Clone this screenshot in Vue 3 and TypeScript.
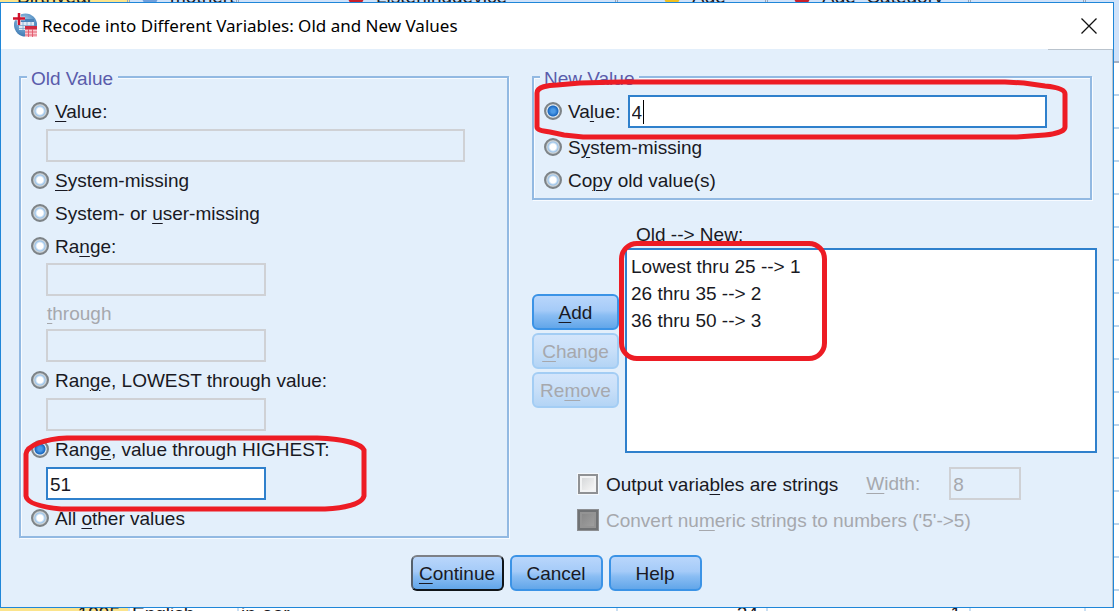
<script setup lang="ts">
import { ref } from 'vue'

interface SheetColumn {
  width: number
  name: string
  cell: string
  dot?: string
  shade?: boolean
  end?: boolean
}

const columns: SheetColumn[] = [
  { width: 130, name: 'Birthyear', cell: '1995', shade: true, end: true },
  { width: 109, name: 'mothert', cell: 'English', dot: '#6f9fdc' },
  { width: 379, name: 'Listeningdevice', cell: 'in-ear', dot: '#c8202c' },
  { width: 150, name: 'Age', cell: '24', dot: '#f0c020', end: true },
  { width: 203, name: 'Age_Category', cell: '1', dot: '#c8202c', end: true },
  { width: 115, name: '', cell: '' },
  { width: 80, name: '', cell: '' },
]
const emptyRows = 16

const oldKind = ref('highest')
const newKind = ref('value')
const highest = ref('51')
const newValue = ref('4')
const outputStrings = ref(false)
const rules = ref<string[]>(['Lowest thru 25 --> 1', '26 thru 35 --> 2', '36 thru 50 --> 3'])
</script>

<template>
  <div class="desktop">
    <div class="sheet-view" aria-hidden="true">
      <table class="sheet">
        <colgroup>
          <col v-for="(c, i) in columns" :key="i" :style="{ width: c.width + 'px' }" />
        </colgroup>
        <thead>
          <tr>
            <th v-for="(c, i) in columns" :key="i" :class="{ shade: c.shade }">
              <span class="head" :class="'head-' + i">
                <i v-if="c.dot" class="dot" :style="{ background: c.dot }"></i>{{ c.name }}
              </span>
            </th>
          </tr>
        </thead>
        <tbody>
          <tr v-for="r in emptyRows" :key="r">
            <td v-for="(c, i) in columns" :key="i" :class="{ shade: c.shade }"></td>
          </tr>
          <tr class="filled">
            <td v-for="(c, i) in columns" :key="i" :class="{ shade: c.shade, right: c.end }">{{ c.cell }}</td>
          </tr>
        </tbody>
      </table>
    </div>

    <section class="dialog" role="dialog" aria-labelledby="dialog-title">
      <header class="titlebar">
        <svg class="app-icon" viewBox="0 0 24 24" aria-hidden="true">
          <defs>
            <radialGradient id="ball" cx="0.45" cy="0.35" r="0.7">
              <stop offset="0" stop-color="#a9cbe8" />
              <stop offset="0.6" stop-color="#5f97c8" />
              <stop offset="1" stop-color="#3a74ad" />
            </radialGradient>
          </defs>
          <circle cx="12.500" cy="12" r="11.500" fill="url(#ball)" />
          <path d="M6 9h15v8H6z" fill="#dfeaf5" />
          <path d="M6 12.500h15M6 15.500h15M10 9v8M14 9v8M18 9v8" stroke="#7fa6cc" stroke-width="0.800" />
          <path d="M6 6h15v3H6z" fill="#4b82b8" />
          <path d="M12 13h12v11H12z" fill="#f9c9cf" />
          <path d="M12 13h12v3.500H12z" fill="#cf2a40" />
          <path d="M12 19h12M12 22h12M15.500 16v8M19.500 16v8" stroke="#e2566a" stroke-width="0.900" />
          <path d="M6 0v12M0 5.500h12" stroke="#fff" stroke-width="3.600" />
          <path d="M6 0v12M0 5.500h12" stroke="#d0112b" stroke-width="2.500" />
        </svg>
        <h1 id="dialog-title">Recode into Different Variables: Old and New Values</h1>
        <button class="close" type="button" aria-label="Close">
          <svg viewBox="0 0 16 16" aria-hidden="true"><path d="M0.500 0.500l15 15M15.500 0.500l-15 15" stroke="#111" stroke-width="1.300" /></svg>
        </button>
      </header>

      <form class="body" @submit.prevent>
        <div class="columns">
          <fieldset class="group old">
            <legend>Old Value</legend>
            <label class="option"><input v-model="oldKind" type="radio" name="old" value="value" /><span><u>V</u>alue:</span></label>
            <input class="field wide" type="text" disabled aria-label="Old value" />
            <label class="option"><input v-model="oldKind" type="radio" name="old" value="sysmis" /><span><u>S</u>ystem-missing</span></label>
            <label class="option"><input v-model="oldKind" type="radio" name="old" value="usermis" /><span>System- or <u>u</u>ser-missing</span></label>
            <label class="option"><input v-model="oldKind" type="radio" name="old" value="range" /><span>Ra<u>n</u>ge:</span></label>
            <input class="field tight" type="text" disabled aria-label="Range start" />
            <label class="through" for="range-end"><span><u>t</u>hrough</span></label>
            <input id="range-end" class="field range-end" type="text" disabled />
            <label class="option"><input v-model="oldKind" type="radio" name="old" value="lowest" /><span>Ran<u>g</u>e, LOWEST through value:</span></label>
            <input class="field" type="text" disabled aria-label="Lowest through" />
            <div class="marked">
              <label class="option"><input v-model="oldKind" type="radio" name="old" value="highest" /><span>Rang<u>e</u>, value through HIGHEST:</span></label>
              <input v-model="highest" class="field" type="text" aria-label="Value through highest" />
              <svg class="mark mark-highest" viewBox="0 0 344 78" aria-hidden="true">
                <path d="M44 4H294C318 5 338 9 341 16V62C339 70 322 74 302 75H38C18 73 4 69 3 62V20C4 11 22 5 44 4Z" />
              </svg>
            </div>
            <label class="option"><input v-model="oldKind" type="radio" name="old" value="else" /><span>All <u>o</u>ther values</span></label>
          </fieldset>

          <div class="side">
            <fieldset class="group new">
              <legend>New Value</legend>
              <div class="value-row">
                <label class="option"><input v-model="newKind" type="radio" name="new" value="value" /><span>Va<u>l</u>ue:</span></label>
                <div class="entry">
                  <input v-model="newValue" class="field" type="text" aria-label="New value" />
                  <i class="caret"></i>
                </div>
                <svg class="mark mark-value" viewBox="0 0 534 62" preserveAspectRatio="none" aria-hidden="true">
                  <path d="M86 5H471L490 6L511 9C522 10 531 12 531 17V50C531 54 522 57 511 58L483 60H49L30 58L16 55C8 54 3 53 3 50V16C3 10 14 8 23 8L46 6Z" />
                </svg>
              </div>
              <label class="option"><input v-model="newKind" type="radio" name="new" value="sysmis" /><span>S<u>y</u>stem-missing</span></label>
              <label class="option"><input v-model="newKind" type="radio" name="new" value="copy" /><span>Co<u>p</u>y old value(s)</span></label>
            </fieldset>

            <div class="rules">
              <label class="rules-label" for="rules">Old --&gt; New:</label>
              <div class="rule-actions">
                <button class="btn" type="button"><u>A</u>dd</button>
                <button class="btn" type="button" disabled><u>C</u>hange</button>
                <button class="btn" type="button" disabled>Re<u>m</u>ove</button>
              </div>
              <div class="list-wrap">
                <select id="rules" class="list" size="7" multiple>
                  <option v-for="rule in rules" :key="rule">{{ rule }}</option>
                </select>
                <div class="mark-box"></div>
              </div>
            </div>

            <div class="output">
              <div class="output-row">
                <label class="check"><input v-model="outputStrings" type="checkbox" /><span>Output varia<u>b</u>les are strings</span></label>
                <label class="width-label" for="width"><u>W</u>idth:</label>
                <input id="width" class="field width-field" type="text" value="8" disabled />
              </div>
              <div class="output-row">
                <label class="check off"><input type="checkbox" disabled /><span>Convert nu<u>m</u>eric strings to numbers ('5'-&gt;5)</span></label>
              </div>
            </div>
          </div>
        </div>

        <footer class="actions">
          <button class="btn default" type="submit"><u>C</u>ontinue</button>
          <button class="btn" type="button">Cancel</button>
          <button class="btn" type="button">Help</button>
        </footer>
      </form>
    </section>
  </div>
</template>

<style>
body {
  margin: 0;
  background: #fff;
}
</style>

<style scoped>
.desktop {
  display: grid;
  position: relative;
  min-height: 100vh;
  overflow: hidden;
  font-family: "Liberation Sans", Arial, sans-serif;
  font-size: 19px;
  line-height: 22px;
  color: #191923;
}
.desktop,
.desktop *,
.desktop *::before {
  box-sizing: border-box;
}

/* Data sheet behind the dialog */
.sheet-view {
  position: absolute;
  inset: 0;
  overflow: hidden;
}
.sheet {
  table-layout: fixed;
  width: 1166px;
  margin-top: -14px;
  border-collapse: separate;
  border-spacing: 0;
}
.sheet th {
  height: 77px;
  padding: 0;
  vertical-align: top;
  text-align: left;
  font-weight: 400;
  background: #cfe2fa;
  border-right: 3px double #9aa5b5;
  border-bottom: 2px solid #a5b1c4;
}
.sheet th.shade,
.sheet td.shade {
  background: #fbe48c;
}
.head {
  display: flex;
  align-items: center;
  gap: 12px;
  padding-left: 12px;
}
.head-0 {
  padding-left: 17px;
}
.head-2 {
  padding-left: 109px;
}
.head-3 {
  padding-left: 46px;
}
.head-4 {
  padding-left: 26px;
}
.dot {
  width: 16px;
  height: 16px;
  border-radius: 50%;
}
.sheet td {
  height: 33px;
  padding: 0 8px 0 2px;
  border-right: 2px solid #cadff2;
  border-bottom: 2px solid #bcd5ec;
}
.sheet .filled td {
  padding-top: 12px;
}
.sheet td.right {
  text-align: right;
}

/* Dialog frame */
.dialog {
  position: relative;
  display: flex;
  flex-direction: column;
  margin: 2px 5px 3px 0;
  border: 1px solid #1f86d8;
  background: #e3effb;
}
.titlebar {
  display: flex;
  align-items: center;
  height: 46px;
  padding: 0 16px 0 12px;
  background: #fff;
}
.app-icon {
  width: 24px;
  height: 24px;
  margin: 0 5px 2px 0;
}
h1 {
  flex: 1;
  margin: 0;
  font: 400 17px/24px "Noto Sans", "Open Sans", sans-serif;
  color: #000;
}
.close {
  display: flex;
  padding: 0;
  border: 0;
  background: none;
}
.close svg {
  width: 16px;
  height: 16px;
}
.body {
  position: relative;
  flex: 1;
  padding: 17px 15px 15px 18px;
  border-right: 1px solid #b9c3cd;
}
.body::before {
  content: "";
  position: absolute;
  top: 0;
  right: 0;
  width: 64px;
  height: 1px;
  background: #b9c3cd;
}
.columns {
  display: grid;
  grid-template-columns: 490fr 565fr;
  gap: 23px;
}

/* Groups */
.group {
  min-width: 0;
  margin: 0;
  padding: 6px 10px 2px;
  border: 2px solid #92b9e2;
  box-shadow: 1px 1px 0 #f8fbff, inset 1px 1px 0 #f8fbff;
}
legend {
  height: 22px;
  margin-left: -4px;
  padding: 0 5px 0 4px;
  line-height: 26px;
  color: #5a5cab;
  background: #e3effb;
}
.option {
  display: flex;
  align-items: center;
  gap: 6px;
  height: 33px;
}
.option span,
.through span,
.check span {
  padding-top: 2px;
}
u {
  text-decoration-thickness: 1px;
  text-underline-offset: 3px;
}
input[type="radio"] {
  appearance: none;
  flex: none;
  width: 18px;
  height: 18px;
  margin: 0;
  border: 2px solid #7d8387;
  border-radius: 50%;
  background: radial-gradient(circle, #fff 0 3px, #9cc4ea 5px, #cdd4d9 6px, #b4babd 7px);
}
input[type="radio"]:checked {
  background: radial-gradient(circle, #4c9ae6 0 2px, #1a68c0 5px, #e6eef4 6px, #b4babd 7px);
}
.field {
  display: block;
  width: 220px;
  height: 33px;
  margin: 2px 0 1px 15px;
  padding: 2px 2px 0;
  border: 2px solid #2f80cc;
  border-radius: 0;
  outline: 0;
  font: inherit;
  color: inherit;
  background: #fff;
}
.field:disabled {
  border-color: #cfd1d5;
  color: #a6a8ad;
  background: transparent;
}
.wide {
  width: calc(100% - 47px);
}
.tight {
  margin-top: 1px;
  margin-bottom: 0;
}
.range-end {
  margin-top: 0;
}
.through {
  display: flex;
  align-items: center;
  height: 33px;
  margin-left: 16px;
  color: #a6a8ad;
}
.marked,
.value-row {
  position: relative;
}
.value-row {
  display: flex;
  align-items: center;
  gap: 7px;
  margin-bottom: 2px;
}
.entry {
  position: relative;
  flex: 1;
  margin-right: 33px;
}
.entry .field {
  width: 100%;
  margin: 1px 0 0;
}
.caret {
  position: absolute;
  top: 6px;
  left: 15px;
  width: 1px;
  height: 24px;
  background: #000;
}

/* Red pen marks */
.mark {
  position: absolute;
  z-index: 1;
  pointer-events: none;
  overflow: visible;
}
.mark path {
  fill: none;
  stroke: #ed1c24;
  stroke-width: 5;
}
.mark-highest {
  top: 2px;
  left: -8px;
  width: 344px;
  height: 78px;
}
.mark-value {
  top: -17px;
  left: -10px;
  width: calc(100% - 2px);
  height: 62px;
}
.mark-box {
  position: absolute;
  top: -7px;
  left: -6px;
  width: 208px;
  height: 120px;
  border: 5px solid #ed1c24;
  border-radius: 18px;
  pointer-events: none;
}

/* Right column */
.new {
  margin-right: 5px;
}
.rules {
  display: grid;
  grid-template-columns: 87px 1fr;
  column-gap: 6px;
  margin-top: 24px;
}
.rules-label {
  grid-column: 2;
  height: 24px;
  padding-left: 11px;
}
.rule-actions {
  display: flex;
  flex-direction: column;
  justify-content: center;
  gap: 3px;
}
.list-wrap {
  position: relative;
}
.list {
  display: block;
  width: 100%;
  height: 205px;
  padding: 3px 0;
  border: 2px solid #2f80cc;
  border-radius: 0;
  outline: 0;
  overflow: hidden;
  font: inherit;
  color: inherit;
  background: #fff;
}
.list option {
  min-height: 27px;
  padding: 3px 4px 2px;
}
.output {
  display: grid;
  gap: 3px;
  margin: 14px 0 0 46px;
}
.output-row {
  display: flex;
  align-items: center;
  height: 33px;
}
.check {
  display: flex;
  align-items: center;
  gap: 8px;
}
.off,
.width-label {
  color: #a6a8ad;
}
input[type="checkbox"] {
  appearance: none;
  width: 20px;
  height: 20px;
  margin: 0;
  border: 2px solid #8f9194;
  outline: 1px solid #f4f8fc;
  background: linear-gradient(135deg, #d2d4d6, #fbfbfb);
  box-shadow: inset 0 0 0 2px #f2f3f4;
}
input[type="checkbox"]:disabled {
  border-color: #707274;
  outline-color: #8d8f92;
  background: linear-gradient(135deg, #858585, #a2a2a2);
  box-shadow: inset 0 0 0 2px #949494;
}
.width-label {
  margin-left: 28px;
}
.width-field {
  width: 72px;
  margin: 0 0 0 29px;
}

/* Buttons */
.btn {
  width: 87px;
  height: 36px;
  padding: 2px 0 0;
  border: 2px solid #3b93e6;
  border-radius: 6px;
  font: inherit;
  color: inherit;
  background: linear-gradient(#b9d6fb, #a5cbf8 45%, #8abdf3 60%, #62a6e9);
}
.btn:disabled {
  border-color: #a3cdf4;
  color: #a6a8ad;
  background: linear-gradient(#d3e5fb, #c8dff8 50%, #b3d4f5);
}
.actions {
  display: flex;
  justify-content: center;
  gap: 6px;
  margin-top: 17px;
  padding-right: 4px;
}
.actions .btn {
  width: 93px;
}
.actions .default {
  border-color: #7d8086 #101418 #101418 #55606c;
}
</style>
